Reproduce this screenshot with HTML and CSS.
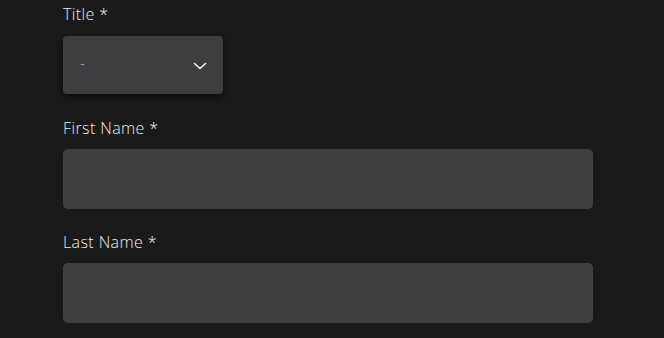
FILE: index.html
```html
<!DOCTYPE html>
<html>
<head>
<meta charset="utf-8">
<link rel="stylesheet" href="styles.css">
</head>
<body>
<form class="form">
  <div class="field">
    <label class="label">Title <span class="req">*</span></label>
    <div class="select">
      <span class="placeholder">-</span>
      <svg class="chevron" width="14" height="8" viewBox="0 0 14 8"><path d="M1.5 1.5 L7 6.5 L12.5 1.5" fill="none" stroke="#f2f2f2" stroke-width="1.6" stroke-linecap="round" stroke-linejoin="round"/></svg>
    </div>
  </div>
  <div class="field">
    <label class="label">First Name <span class="req">*</span></label>
    <div class="input"></div>
  </div>
  <div class="field">
    <label class="label">Last Name <span class="req">*</span></label>
    <div class="input"></div>
  </div>
</form>
</body>
</html>
```
FILE: styles.css
```css
html, body {
  margin: 0;
  padding: 0;
  background: #1a1a1a;
}
body {
  font-family: "Open Sans", "Liberation Sans", sans-serif;
  width: 664px;
  height: 338px;
  overflow: hidden;
}
.form {
  display: flex;
  flex-direction: column;
  gap: 23px;
  padding: 4px 0 0 63px;
}
.field {
  display: flex;
  flex-direction: column;
  gap: 11px;
}
.label {
  font-size: 16px;
  font-weight: 300;
  line-height: 20px;
  color: #ececee;
  letter-spacing: 0.4px;
}
.req {
  color: #f4f4f4;
}
.select {
  width: 160px;
  height: 58px;
  margin: 1px 0;
  box-sizing: border-box;
  background: #3d3e40;
  border-radius: 4px;
  box-shadow: 0 3px 8px rgba(0,0,0,0.6);
  display: flex;
  align-items: center;
  justify-content: space-between;
  padding: 0 16px 0 17px;
}
.placeholder {
  color: #9a9b9d;
  font-size: 15px;
  line-height: 1;
  margin-top: -4px;
}
.chevron {
  display: block;
  margin-top: 2px;
}
.input {
  width: 530px;
  height: 60px;
  background: #3c3e40;
  border-radius: 5px;
}
```
